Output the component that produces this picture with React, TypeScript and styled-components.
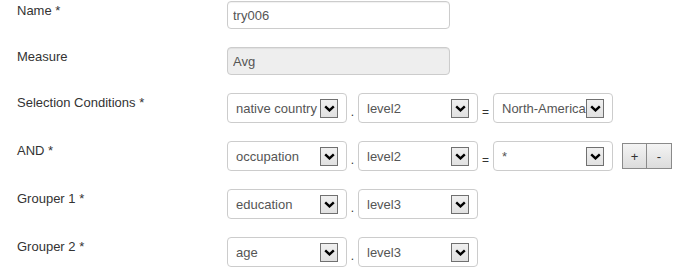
import React from 'react'
import styled, { createGlobalStyle } from 'styled-components'

const GlobalStyle = createGlobalStyle`
  html, body {
    margin: 0;
    padding: 0;
    background: #fff;
  }
  body {
    font-family: "Liberation Sans", Arial, sans-serif;
    font-size: 13px;
    color: #333;
  }
`

interface ICondition {
  label: string
  field: string
  level: string
  value?: string
  buttons?: boolean
}

const rows: ICondition[] = [
  { label: 'Selection Conditions *', field: 'native country', level: 'level2', value: 'North-America' },
  { label: 'AND *', field: 'occupation', level: 'level2', value: '*', buttons: true },
  { label: 'Grouper 1 *', field: 'education', level: 'level3' },
  { label: 'Grouper 2 *', field: 'age', level: 'level3' },
]

const Chevron = () => (
  <svg width="11" height="7" viewBox="0 0 11 7">
    <path d="M1.2 1.3 L5.5 5.4 L9.8 1.3" fill="none" stroke="#000" strokeWidth="2.4" />
  </svg>
)

const Select = ({ value }: { value: string }) => (
  <SelectBox>
    <SelectValue>{value}</SelectValue>
    <Arrow>
      <Chevron />
    </Arrow>
  </SelectBox>
)

export default function App() {
  return (
    <Form>
      <GlobalStyle />
      <Row>
        <Label>Name *</Label>
        <TextInput value="try006" readOnly />
      </Row>
      <Row>
        <Label>Measure</Label>
        <TextInput value="Avg" readOnly disabled />
      </Row>
      {rows.map(r => (
        <Row key={r.label}>
          <Label>{r.label}</Label>
          <Select value={r.field} />
          <Sep $w={11}>.</Sep>
          <Select value={r.level} />
          {r.value !== undefined && (
            <>
              <Sep $w={15}>=</Sep>
              <Select value={r.value} />
            </>
          )}
          {r.buttons && (
            <BtnGroup>
              <Btn>+</Btn>
              <Btn>-</Btn>
            </BtnGroup>
          )}
        </Row>
      ))}
    </Form>
  )
}

const Form = styled.div`
  display: flex;
  flex-direction: column;
  gap: 18px;
  padding: 1px 0 0 17px;
`

const Row = styled.div`
  display: flex;
  align-items: flex-start;
`

const Label = styled.div`
  width: 210px;
  flex-shrink: 0;
  line-height: 20px;
  color: #333;
`

const TextInput = styled.input`
  box-sizing: border-box;
  width: 223px;
  height: 28px;
  margin: 0;
  padding: 0 5px;
  border: 1px solid #ccc;
  border-radius: 4px;
  background: #fff;
  box-shadow: inset 0 1px 1px rgba(0, 0, 0, 0.06);
  font-family: "Liberation Sans", Arial, sans-serif;
  font-size: 13px;
  color: #555;
  outline: none;

  &:disabled {
    background: #eee;
    color: #555;
    opacity: 1;
  }
`

const SelectBox = styled.div`
  box-sizing: border-box;
  width: 120px;
  height: 30px;
  display: flex;
  align-items: center;
  padding: 0 8px 0 8px;
  border: 1px solid #ccc;
  border-radius: 4px;
  background: #fff;
  color: #555;
`

const SelectValue = styled.span`
  flex: 1;
  min-width: 0;
  overflow: hidden;
  white-space: nowrap;
`

const Arrow = styled.span`
  box-sizing: border-box;
  flex-shrink: 0;
  width: 18px;
  height: 19px;
  display: flex;
  align-items: center;
  justify-content: center;
  border: 1px solid #707070;
  background: linear-gradient(#f0f0f0, #e1e1e1);
`

const Sep = styled.span<{ $w: number }>`
  width: ${p => p.$w}px;
  align-self: flex-end;
  margin-bottom: 5px;
  text-align: center;
  font-size: 12px;
  line-height: 12px;
  color: #333;
`

const BtnGroup = styled.div`
  display: flex;
  align-self: center;
  margin-left: 9px;
`

const Btn = styled.button`
  box-sizing: border-box;
  width: 25px;
  height: 26px;
  margin: 0;
  padding: 0;
  border: 1px solid #8a8a8a;
  background: linear-gradient(#f4f4f4, #dcdcdc);
  font-family: "Liberation Sans", Arial, sans-serif;
  font-size: 13px;
  color: #333;

  & + & {
    border-left: none;
  }
`
